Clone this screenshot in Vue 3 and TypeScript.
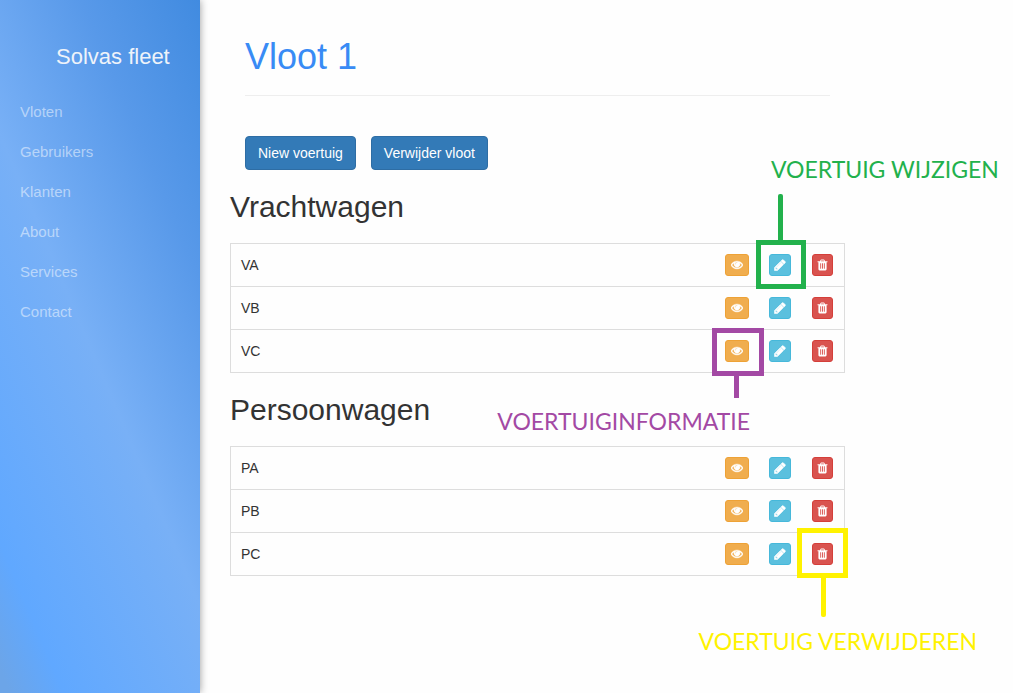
<script setup lang="ts">
interface Callout {
  kind: 'edit' | 'view' | 'remove'
  label: string
}
interface Vehicle {
  name: string
  callout?: Callout
}
interface Group {
  title: string
  vehicles: Vehicle[]
}
interface Action {
  kind: 'view' | 'edit' | 'remove'
  label: string
  viewBox: string
  path: string
}

const links: string[] = ['Vloten', 'Gebruikers', 'Klanten', 'About', 'Services', 'Contact']

const groups: Group[] = [
  {
    title: 'Vrachtwagen',
    vehicles: [
      { name: 'VA', callout: { kind: 'edit', label: 'VOERTUIG WIJZIGEN' } },
      { name: 'VB' },
      { name: 'VC', callout: { kind: 'view', label: 'VOERTUIGINFORMATIE' } },
    ],
  },
  {
    title: 'Persoonwagen',
    vehicles: [
      { name: 'PA' },
      { name: 'PB' },
      { name: 'PC', callout: { kind: 'remove', label: 'VOERTUIG VERWIJDEREN' } },
    ],
  },
]

const actions: Action[] = [
  {
    kind: 'view',
    label: 'Bekijk',
    viewBox: '0 64 1792 1792',
    path: 'M1664 960q-152-236-381-353 61 104 61 225 0 185-131.500 316.500t-316.500 131.500-316.500-131.500-131.500-316.500q0-121 61-225-229 117-381 353 133 205 333.500 326.500t434.500 121.500 434.500-121.500 333.500-326.500zM944 576q0-20-14-34t-34-14q-125 0-214.500 89.500t-89.500 214.500q0 20 14 34t34 14 34-14 14-34q0-86 61-147t147-61q20 0 34-14t14-34zM1792 960q0 34-20 69-140 230-376.500 368.500t-499.500 138.500-499.500-139-376.500-368q-20-35-20-69t20-69q140-229 376.500-368t499.500-139 499.500 139 376.500 368q20 35 20 69z',
  },
  {
    kind: 'edit',
    label: 'Wijzig',
    viewBox: '64 64 1664 1664',
    path: 'M491 1536l91-91-235-235-91 91v107h128v128h107zM1014 608q0-22-22-22-10 0-17 7l-542 542q-7 7-7 17 0 22 22 22 10 0 17-7l542-542q7-7 7-17zM960 416l416 416-832 832h-416v-416zM1643 512q0 53-37 90l-166 166-416-416 166-165q36-38 90-38 53 0 91 38l235 234q37 39 37 91z',
  },
  {
    kind: 'remove',
    label: 'Verwijder',
    viewBox: '121 50 1549 1690',
    path: 'M704 1376v-704q0-14-9-23t-23-9h-64q-14 0-23 9t-9 23v704q0 14 9 23t23 9h64q14 0 23-9t9-23zM960 1376v-704q0-14-9-23t-23-9h-64q-14 0-23 9t-9 23v704q0 14 9 23t23 9h64q14 0 23-9t9-23zM1216 1376v-704q0-14-9-23t-23-9h-64q-14 0-23 9t-9 23v704q0 14 9 23t23 9h64q14 0 23-9t9-23zM672 384h448l-48-117q-7-9-17-11h-317q-10 2-17 11zM1600 416v64q0 14-9 23t-23 9h-96v948q0 83-47 143.500t-113 60.500h-832q-66 0-113-58.500t-47-141.500v-952h-96q-14 0-23-9t-9-23v-64q0-14 9-23t23-9h309l70-167q15-37 54-63t79-26h320q40 0 79 26t54 63l70 167h309q14 0 23 9t9 23z',
  },
]
</script>

<template>
  <div class="page">
    <nav class="sidebar">
      <a class="brand" href="#">Solvas fleet</a>
      <ul class="menu">
        <li v-for="link in links" :key="link"><a href="#">{{ link }}</a></li>
      </ul>
    </nav>

    <main class="content">
      <header class="heading">
        <h1>Vloot 1</h1>
      </header>
      <div class="toolbar">
        <button type="button" class="primary">Niew voertuig</button>
        <button type="button" class="primary">Verwijder vloot</button>
      </div>

      <section v-for="group in groups" :key="group.title">
        <h2>{{ group.title }}</h2>
        <table :aria-label="group.title">
          <tbody>
            <tr v-for="vehicle in group.vehicles" :key="vehicle.name">
              <td class="name">{{ vehicle.name }}</td>
              <td v-for="action in actions" :key="action.kind">
                <div class="slot" :class="`slot-${action.kind}`">
                  <button type="button" class="icon-button" :class="action.kind" :aria-label="`${action.label} ${vehicle.name}`">
                    <svg :viewBox="action.viewBox" aria-hidden="true"><path :d="action.path" /></svg>
                  </button>
                  <div v-if="vehicle.callout?.kind === action.kind" class="callout" :class="`callout-${action.kind}`">
                    <span class="stem"></span>
                    <span class="note">{{ vehicle.callout.label }}</span>
                  </div>
                </div>
              </td>
            </tr>
          </tbody>
        </table>
      </section>
    </main>
  </div>
</template>

<style>
body {
  margin: 0;
  background: #fefefe;
}
</style>

<style scoped>
.page {
  display: flex;
  min-height: 100vh;
  font: 14px/20px "Liberation Sans", Arial, sans-serif;
  color: #333;
}
.page * {
  box-sizing: border-box;
}
.sidebar {
  flex: 0 0 200px;
  padding-top: 37px;
  background: linear-gradient(247deg, #418be0 0%, #5899e9 24%, #78b0f6 52%, #60a8ff 87%, #6ca5e8 98%);
  box-shadow: 0 0 8px rgba(0, 0, 0, 0.4);
}
.brand {
  display: block;
  padding-left: 56px;
  font-size: 22px;
  line-height: 40px;
  color: #eef3fa;
  text-decoration: none;
}
.menu {
  margin: 15px 0 0;
  padding: 0;
  list-style: none;
}
.menu a {
  display: block;
  padding-left: 20px;
  font-size: 15px;
  line-height: 40px;
  color: rgba(255, 255, 255, 0.5);
  text-decoration: none;
}
.content {
  flex: 1;
  min-width: 0;
  padding: 37px 168px 40px 30px;
}
.heading {
  margin: 0 15px 40px;
  padding-bottom: 18px;
  border-bottom: 1px solid #eee;
}
h1,
h2 {
  margin: 0;
  font-weight: 400;
}
h1 {
  font-size: 36px;
  line-height: 40px;
  color: #388bf5;
}
h2 {
  margin: 20px 0;
  font-size: 30px;
  line-height: 33px;
}
.toolbar {
  display: flex;
  gap: 15px;
  margin: 0 15px;
}
.primary {
  padding: 6px 12px;
  border: 1px solid #2e6da4;
  border-radius: 4px;
  background: #337ab7;
  color: #fff;
  font: inherit;
}
table {
  width: 100%;
  border: 1px solid #ddd;
  border-collapse: collapse;
}
tr {
  height: 43px;
  border-top: 1px solid #ddd;
}
td {
  padding: 0 10px;
}
.name {
  width: 100%;
}
.slot {
  position: relative;
}
.slot-view {
  width: 24px;
}
.slot-edit {
  width: 23px;
}
.slot-remove {
  width: 22px;
}
.icon-button {
  display: flex;
  align-items: center;
  padding: 4px;
  border: 1px solid;
  border-radius: 3px;
}
.icon-button svg {
  display: block;
  width: 12px;
  height: 12px;
  fill: #fff;
}
.view {
  padding: 4px 5px;
  background: #f0ad4e;
  border-color: #eea236;
}
.edit {
  background: #5bc0de;
  border-color: #46b8da;
}
.remove {
  background: #d9534f;
  border-color: #d43f3a;
}
.view svg,
.edit svg {
  stroke: #fff;
  stroke-width: 80;
}
.remove svg {
  width: 11px;
}

/* Coloured frames with a stem and a note, laid over the table */
.callout {
  position: absolute;
  z-index: 1;
  border: 5px solid currentColor;
  pointer-events: none;
}
.stem {
  position: absolute;
  width: 5px;
  background: currentColor;
}
.note {
  position: absolute;
  font: 23px/30px Lato, "Open Sans", sans-serif;
  white-space: nowrap;
}
.callout-edit {
  inset: -14px -14px -13px -13px;
  color: #22b14c;
}
.callout-edit .stem {
  left: 17px;
  bottom: 100%;
  height: 51px;
  border-radius: 2px 2px 0 0;
}
.callout-edit .note {
  left: 10px;
  bottom: 100px;
}
.callout-view {
  inset: -12px -15px -14px -13px;
  color: #a349a4;
}
.callout-view .stem {
  left: 17px;
  top: 100%;
  height: 27px;
}
.callout-view .note {
  right: 9px;
  top: 73px;
}
.callout-remove {
  inset: -15px -14px -13px -15px;
  color: #fff200;
}
.callout-remove .stem {
  left: 19px;
  top: 100%;
  height: 44px;
  border-radius: 0 0 2px 2px;
}
.callout-remove .note {
  right: -134px;
  top: 93px;
}
</style>
